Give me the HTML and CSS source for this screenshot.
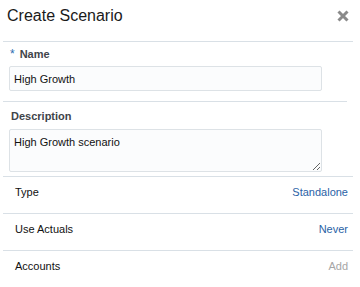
FILE: index.html
```html
<!DOCTYPE html>
<html>
<head>
<meta charset="utf-8">
<link rel="stylesheet" href="styles.css">
</head>
<body>
<div class="dialog">
  <div class="header">
    <h1 class="title">Create Scenario</h1>
    <button class="close" aria-label="Close">
      <svg width="12" height="12" viewBox="0 0 12 12"><path d="M1.5 1.5 L10.5 10.5 M10.5 1.5 L1.5 10.5" stroke="#8a8a8a" stroke-width="3" stroke-linecap="butt"/></svg>
    </button>
  </div>
  <div class="field field-name">
    <label class="label"><span class="req">*</span>Name</label>
    <input class="input" type="text" value="High Growth">
  </div>
  <div class="field field-desc">
    <label class="label label-desc">Description</label>
    <textarea class="textarea">High Growth scenario</textarea>
  </div>
  <div class="row">
    <span class="row-label">Type</span>
    <span class="row-value">Standalone</span>
  </div>
  <div class="row">
    <span class="row-label">Use Actuals</span>
    <span class="row-value">Never</span>
  </div>
  <div class="row">
    <span class="row-label">Accounts</span>
    <span class="row-value muted">Add</span>
  </div>
</div>
</body>
</html>
```
FILE: styles.css
```css
html, body {
  margin: 0;
  padding: 0;
  background: #ffffff;
}
body {
  font-family: "Liberation Sans", Arial, sans-serif;
  color: #1b1b1b;
}
.dialog {
  padding: 0 7px 0 3px;
}
.header {
  display: flex;
  justify-content: space-between;
  align-items: flex-start;
  padding: 7px 4px 16px 4px;
  border-bottom: 1px solid #d9e0e6;
}
.title {
  margin: 0;
  font-size: 16px;
  font-weight: normal;
  line-height: 18px;
  color: #1a1a1a;
}
.close {
  border: 0;
  background: none;
  padding: 0;
  margin: 3px 0 0 0;
  width: 12px;
  height: 12px;
  display: block;
}
.close svg {
  display: block;
}
.field {
  display: flex;
  flex-direction: column;
  border-bottom: 1px solid #d9e0e6;
}
.field-name {
  margin-right: 6px;
  padding: 6px 0 10px 0;
}
.field-desc {
  padding: 8px 0 4px 0;
}
.label {
  font-size: 11px;
  line-height: 13px;
  font-weight: bold;
  color: #3f444a;
  padding-left: 7px;
}
.label-desc {
  padding-left: 8px;
}
.req {
  color: #2b6cb0;
  font-weight: normal;
  font-size: 12px;
  margin-right: 5px;
}
.input, .textarea {
  font-family: "Liberation Sans", Arial, sans-serif;
  font-size: 11px;
  color: #111111;
  background: #fbfcfd;
  border: 1px solid #dde2e6;
  border-radius: 2px;
  box-sizing: border-box;
  width: 313px;
  margin-left: 6px;
  outline: none;
}
.input {
  height: 25px;
  margin-top: 5px;
  padding: 0 4px;
}
.textarea {
  height: 43px;
  margin-top: 6px;
  padding: 6px 4px;
  line-height: 13px;
  resize: vertical;
  display: block;
}
.row {
  display: flex;
  justify-content: space-between;
  padding: 9px 5px 14px 12px;
  font-size: 11px;
  line-height: 13px;
}
.row + .row {
  border-top: 1px solid #d9e0e6;
}
.row-label {
  color: #111111;
}
.row-value {
  color: #2a62a6;
}
.row-value.muted {
  color: #a6a6a6;
}
```
